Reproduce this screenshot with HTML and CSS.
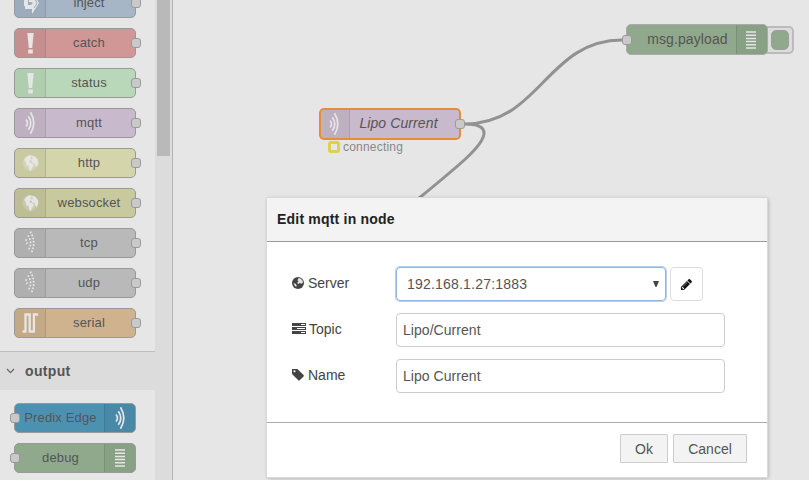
FILE: index.html
```html
<!DOCTYPE html>
<html lang="en">
<head>
<meta charset="utf-8">
<title>Edit mqtt in node</title>
<link rel="stylesheet" href="styles.css">
</head>
<body>
<svg class="defs" aria-hidden="true">
  <symbol id="inject" viewBox="0 0 30 30"><path d="M9 11h4v7H9zM14 10h4V5l6 10-7 11v-5h-7v-4h6l2-2-2-1h-2z" fill="currentColor"/><path d="M19 9l3 6-3 5" fill="none" stroke="#9eadbd"/></symbol>
  <symbol id="alert" viewBox="0 0 30 30"><path d="M12.300 5h6.400l-1.500 15h-3.400zM13.200 21.400h4.600v4.100h-4.600z" fill="currentColor"/></symbol>
  <symbol id="waves" viewBox="0 0 30 30"><path d="M11 11.500q3 3.500 0 7M13.300 8.200q5 6.800 0 13.600M15.500 4.300q6.600 10.700 0 21.400" fill="none" stroke="currentColor" stroke-width="1.7"/></symbol>
  <symbol id="dots" viewBox="0 0 30 30"><path d="M11 12q2 3 0 6.200M13.300 8q4.600 7 0 14.200M15.700 4.300q6 10.700 0 21.800" fill="none" stroke="currentColor" stroke-width="1.900" stroke-linecap="round" stroke-dasharray=".1 3.200"/></symbol>
  <symbol id="globe" viewBox="0 0 30 30"><circle cx="15.500" cy="15" r="8" fill="currentColor" opacity=".28"/><path d="M9.500 12l2-3 3.500-1.700 1.500.7-1 2 1 1.500-2.500 1.500.5 1.500 3 1 1.200 2-2 2.500-1.200 3-1.500-2.500v-2.500l-2.500-1-.5-3zM17 8.500l3 .3 2.500 3.200.5 3.500-1.500 3-1.500-1.500v-2l-2.500-.5-1-2 1.500-1.500z" fill="currentColor" stroke="currentColor" stroke-width=".5"/></symbol>
  <symbol id="serial" viewBox="0 0 30 30"><path d="M7.500 23.500h3v-17h4.200v17h4.200v-17h4.300" fill="none" stroke="currentColor" stroke-width="2.300"/></symbol>
  <symbol id="lines" viewBox="0 0 30 30"><path d="M10 7h10M10 10.200h10M10 13.400h10M10 16.600h10M10 19.800h10M10 23h10" stroke="currentColor" stroke-width="1.500"/></symbol>
</svg>
<div class="editor">
  <aside class="palette">
    <div class="palette-list">
      <div class="group inputs">
        <div class="node inject"><span class="icon"><svg><use href="#inject"/></svg></span><span class="name">inject</span><i class="port"></i></div>
        <div class="node catch"><span class="icon"><svg><use href="#alert"/></svg></span><span class="name">catch</span><i class="port"></i></div>
        <div class="node status"><span class="icon"><svg><use href="#alert"/></svg></span><span class="name">status</span><i class="port"></i></div>
        <div class="node mqtt"><span class="icon"><svg><use href="#waves"/></svg></span><span class="name">mqtt</span><i class="port"></i></div>
        <div class="node http"><span class="icon"><svg><use href="#globe"/></svg></span><span class="name">http</span><i class="port"></i></div>
        <div class="node websocket"><span class="icon"><svg><use href="#globe"/></svg></span><span class="name">websocket</span><i class="port"></i></div>
        <div class="node socket"><span class="icon"><svg><use href="#dots"/></svg></span><span class="name">tcp</span><i class="port"></i></div>
        <div class="node socket"><span class="icon"><svg><use href="#dots"/></svg></span><span class="name">udp</span><i class="port"></i></div>
        <div class="node serial"><span class="icon"><svg><use href="#serial"/></svg></span><span class="name">serial</span><i class="port"></i></div>
      </div>
      <div class="category"><svg class="chevron" viewBox="0 0 8 6"><path d="M.5 1l3.500 3.600L7.500 1" fill="none" stroke="#666" stroke-width="1.200"/></svg>output</div>
      <div class="group outputs">
        <div class="node out predix"><i class="port"></i><span class="name">Predix Edge</span><span class="icon"><svg><use href="#waves"/></svg></span></div>
        <div class="node out debug"><i class="port"></i><span class="name">debug</span><span class="icon"><svg><use href="#lines"/></svg></span></div>
      </div>
    </div>
    <div class="scrollbar"><div class="thumb"></div></div>
  </aside>
  <main class="canvas">
    <svg class="wires" viewBox="173 0 636 480"><path d="M465 124C540 124 547 40 622 40M465 124C479 124 484 127.500 484 133C484 145 462 163 418 199" fill="none" stroke="#929292" stroke-width="3"/></svg>
    <div class="node flow mqtt selected"><span class="icon"><svg><use href="#waves"/></svg></span><span class="name">Lipo Current</span><i class="port"></i></div>
    <div class="node-status"><i></i>connecting</div>
    <div class="toggle"><i></i></div>
    <div class="node flow out debug payload"><i class="port"></i><span class="name">msg.payload</span><span class="icon"><svg><use href="#lines"/></svg></span></div>
  </main>
</div>
<section class="dialog">
  <header>Edit mqtt in node</header>
  <div class="form">
    <div class="row">
      <label><svg width="12" height="12" viewBox="0 0 12 12"><circle cx="6" cy="6" r="6" fill="#444"/><path d="M6.500 1l2 .5 2 2 .5 2-1.500 1.200-1.800-.6-1.200 1-1.500-1L6.500 4.500 5.500 3.300zM1.500 6l2 .8 1.200 1.500-.5 1.700-1.500-1.200z" fill="#fff" opacity=".85"/></svg>Server</label>
      <div class="field select">192.168.1.27:1883<svg width="6" height="6" viewBox="0 0 6 6"><path d="M0 0h6L3.500 6h-1z" fill="#444"/></svg></div>
      <button class="edit"><svg width="13" height="13" viewBox="0 0 1792 1792"><path d="M491 1536l91-91-235-235-91 91v107h128v128h107zm523-928q0-22-22-22-10 0-17 7l-542 542q-7 7-7 17 0 22 22 22 10 0 17-7l542-542q7-7 7-17zm-54-192l416 416-832 832h-416v-416zm683 96q0 53-37 90l-166 166-416-416 166-165q36-38 90-38 53 0 91 38l235 234q37 39 37 91z" fill="#111"/></svg></button>
    </div>
    <div class="row">
      <label class="topic"><svg width="14" height="11" viewBox="0 0 14 11"><path d="M0 0h14v3H0zM0 4h14v3H0zM0 8h14v3H0z" fill="#444"/><path d="M9 1.500h4M5 5.500h8M9 9.500h4" stroke="#fff"/></svg>Topic</label>
      <div class="field">Lipo/Current</div>
    </div>
    <div class="row">
      <label><svg width="12" height="12" viewBox="128 192 1536 1472"><path d="M576 448q0-53-37.500-90.500t-90.500-37.500-90.500 37.500-37.500 90.500 37.500 90.500 90.500 37.500 90.500-37.500 37.500-90.500zm1067 576q0 53-37 90l-491 492q-39 37-91 37-53 0-90-37l-715-716q-38-37-64.500-101t-26.500-117v-416q0-52 38-90t90-38h416q53 0 117 26.500t102 64.500l715 714q37 39 37 91z" fill="#444"/></svg>Name</label>
      <div class="field">Lipo Current</div>
    </div>
  </div>
  <footer><button>Ok</button><button>Cancel</button></footer>
</section>
</body>
</html>
```
FILE: styles.css
```css
* { box-sizing: border-box; }
body { margin: 0; width: 809px; height: 480px; overflow: hidden; position: relative; font: 14px/20px "Liberation Sans", Arial, sans-serif; color: #555; background: #e6e6e6; }
.defs { position: absolute; width: 0; height: 0; }
.editor { display: flex; height: 480px; }
.palette { display: flex; flex: none; width: 173px; height: 480px; overflow: hidden; border-right: 1px solid #b3b3b3; }
.palette-list { width: 155px; height: 480px; overflow: hidden; }
.scrollbar { width: 17px; background: #dcdcdc; padding: 0 2px; }
.thumb { height: 156px; background: #b9b9b9; }
.group { display: flex; flex-direction: column; gap: 10px; padding-left: 14px; }
.inputs { margin-top: -12px; }
.outputs { padding-top: 13px; }
.category { display: flex; align-items: center; height: 39px; margin-top: 13px; padding-left: 6px; border-top: 1px solid #bebebe; background: #dcdcdc; font-weight: bold; letter-spacing: .35px; }
.chevron { width: 9px; height: 6px; margin-right: 10px; }

.node { position: relative; display: flex; flex: none; width: 122px; height: 30px; border: 1px solid #999; border-radius: 5px; }
.icon { flex: none; width: 31px; background: rgba(0,0,0,.05); border-right: 1px solid rgba(0,0,0,.1); border-radius: 4px 0 0 4px; color: #e6e6e6; }
.icon svg { display: block; width: 30px; height: 30px; margin-top: -1px; }
.name { flex: 1; padding-right: 3px; text-align: center; line-height: 28px; white-space: nowrap; font-size: 13px; letter-spacing: .15px; }
.port { position: absolute; right: -6px; top: 9px; width: 10px; height: 10px; background: #c9c9c9; border: 1px solid #999; border-radius: 3px; }
.out .port { right: auto; left: -5px; }
.out .icon { border-right: 0; border-left: 1px solid rgba(0,0,0,.1); border-radius: 0 4px 4px 0; }
.out .name { padding: 0 0 0 2px; }
.inject { background: #a6b6c7; }
.catch { background: #d19797; }
.status { background: #b9d8b9; }
.mqtt { background: #c9b9cc; }
.http { background: #d4d5aa; }
.websocket { background: #c8c99d; }
.socket { background: #b9b9b9; }
.serial { background: #ceb38e; }
.predix { background: #4d91b1; }
.debug { background: #90a98c; }

.canvas { position: relative; flex: 1; }
.wires { position: absolute; left: 0; top: 0; width: 636px; height: 480px; }
.flow { position: absolute; height: 31px; }
.selected { left: 146px; top: 108px; width: 142px; height: 32px; border: 2px solid #e78d3a; }
.selected .name { font-size: 14px; font-style: italic; line-height: 27px; letter-spacing: .1px; padding-right: 12px; }
.selected .icon { width: 29px; }
.selected .icon svg { margin-left: -2px; }
.selected .port { right: -6px; top: 9px; }
.node-status { position: absolute; left: 155px; top: 138px; display: flex; align-items: center; height: 18px; font-size: 12px; letter-spacing: .2px; color: #888; }
.node-status i { width: 12px; height: 12px; margin-right: 3px; border: 3px solid #e0cf50; border-radius: 3px; }
.payload { left: 453px; top: 24px; width: 142px; border-color: #aaa; }
.payload .name { font-size: 14px; padding-left: 12px; letter-spacing: .1px; }
.payload .port { top: 10px; }
.payload .icon { width: 31px; }
.payload .icon svg { margin-left: -1px; margin-top: 0; }
.toggle { position: absolute; left: 585px; top: 26px; width: 36px; height: 28px; border: 2px solid #bbb; border-radius: 5px; background: #dcdcdc; }
.toggle i { position: absolute; left: 11px; top: 2px; width: 18px; height: 20px; border: 1.5px solid #a0a0a0; border-radius: 5px; background: #90a98c; }

.dialog { position: absolute; left: 267px; top: 198px; width: 500px; height: 279px; background: #fff; box-shadow: 0 0 0 1px #d9d9d9, 1px 1px 4px rgba(0,0,0,.3); color: #444; }
header { height: 44px; padding-left: 10px; border-bottom: 1px solid #999; background: #f3f3f3; color: #222; font-weight: bold; line-height: 43px; letter-spacing: .2px; }
.form { display: flex; flex-direction: column; gap: 12px; height: 180px; padding: 25px 0 0 25px; }
.row { display: flex; height: 34px; }
label { display: flex; align-items: center; flex: none; width: 104px; padding-bottom: 2px; }
label svg { margin-right: 4px; }
.topic svg { margin: 0 3px 1px 0; }
.field { width: 329px; height: 34px; padding: 0 7px; border: 1px solid #ccc; border-radius: 4px; line-height: 33px; padding-left: 6px; color: #555; letter-spacing: .05px; }
.select { display: flex; justify-content: space-between; align-items: center; width: 270px; padding: 0 6px 0 10px; border-color: #8fb5e2; box-shadow: 0 0 0 1px #b5d0ef; letter-spacing: .2px; }
button { padding: 0; border: 1px solid #ccc; background: #f3f3f3; color: #555; font: inherit; }
.edit { display: flex; align-items: center; justify-content: center; width: 33px; height: 34px; margin-left: 4px; border-color: #ddd; border-radius: 4px; background: #fff; }
footer { display: flex; justify-content: flex-end; gap: 5px; height: 55px; padding: 11px 20px 0 0; border-top: 1px solid #aaa; }
footer button { width: 48px; height: 29px; border-radius: 1px; }
footer button + button { width: 74px; }
```
